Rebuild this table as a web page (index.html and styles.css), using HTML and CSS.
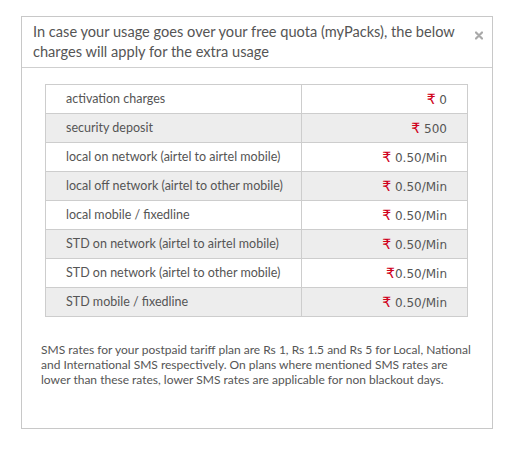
FILE: index.html
```html
<!DOCTYPE html>
<html>
<head>
<meta charset="utf-8">
<link rel="stylesheet" href="styles.css">
</head>
<body>
<div class="modal">
  <div class="modal-header">
    <p class="title">In case your usage goes over your free quota (myPacks), the below charges will apply for the extra usage</p>
    <svg class="close" width="8" height="9" viewBox="0 0 8 9"><path d="M1 1.5 L7 7.5 M7 1.5 L1 7.5" stroke="#a9a9a9" stroke-width="2.2" stroke-linecap="round"/></svg>
  </div>
  <div class="modal-body">
    <table class="rates">
      <tr><td class="label">activation charges</td><td class="value"><span class="rs">&#8377;</span> 0</td></tr>
      <tr><td class="label">security deposit</td><td class="value"><span class="rs">&#8377;</span> 500</td></tr>
      <tr><td class="label">local on network (airtel to airtel mobile)</td><td class="value"><span class="rs">&#8377;</span> 0.50/Min</td></tr>
      <tr><td class="label">local off network (airtel to other mobile)</td><td class="value"><span class="rs">&#8377;</span> 0.50/Min</td></tr>
      <tr><td class="label">local mobile / fixedline</td><td class="value"><span class="rs">&#8377;</span> 0.50/Min</td></tr>
      <tr><td class="label">STD on network (airtel to airtel mobile)</td><td class="value"><span class="rs">&#8377;</span> 0.50/Min</td></tr>
      <tr><td class="label">STD on network (airtel to other mobile)</td><td class="value"><span class="rs">&#8377;</span>0.50/Min</td></tr>
      <tr><td class="label">STD mobile / fixedline</td><td class="value"><span class="rs">&#8377;</span> 0.50/Min</td></tr>
    </table>
    <p class="note">SMS rates for your postpaid tariff plan are Rs 1, Rs 1.5 and Rs 5 for Local, National and International SMS respectively. On plans where mentioned SMS rates are lower than these rates, lower SMS rates are applicable for non blackout days.</p>
  </div>
</div>
</body>
</html>
```
FILE: styles.css
```css
html, body {
  margin: 0;
  padding: 0;
  background: #fff;
}
body {
  padding: 16px 0 0 21px;
  font-family: "Lato", "Open Sans", sans-serif;
  color: #555;
}
.modal {
  width: 470px;
  height: 411px;
  border: 1px solid #c8c8c8;
  box-sizing: content-box;
}
.modal-header {
  display: flex;
  justify-content: space-between;
  align-items: flex-start;
  padding: 5px 9px 6px 11px;
  border-bottom: 1px solid #cfcfcf;
  height: 39px;
}
.title {
  margin: 0;
  font-size: 14.6px;
  line-height: 20px;
  width: 430px;
  color: #555;
}
.close {
  margin-top: 9px;
  flex: none;
}
.modal-body {
  padding: 16px 24px 0 23px;
}
.rates {
  width: 423px;
  border-collapse: collapse;
  border: 1px solid #cdcdcd;
}
.rates td {
  border: 1px solid #cdcdcd;
  height: 28px;
  padding: 0;
  font-size: 12.5px;
  line-height: 14px;
  color: #555;
  vertical-align: middle;
}
.rates tr:nth-child(even) td {
  background: #ededed;
}
.label {
  width: 235px;
  padding-left: 20px !important;
}
.value {
  text-align: right;
  padding-right: 20px !important;
  font-family: "DejaVu Sans", sans-serif;
  font-size: 12px !important;
}
.rs {
  color: #d0021b;
  font-size: 14px;
}
.note {
  margin: 25px 0 0 -4px;
  font-size: 12px;
  line-height: 15px;
  color: #555;
  width: 430px;
}
```
